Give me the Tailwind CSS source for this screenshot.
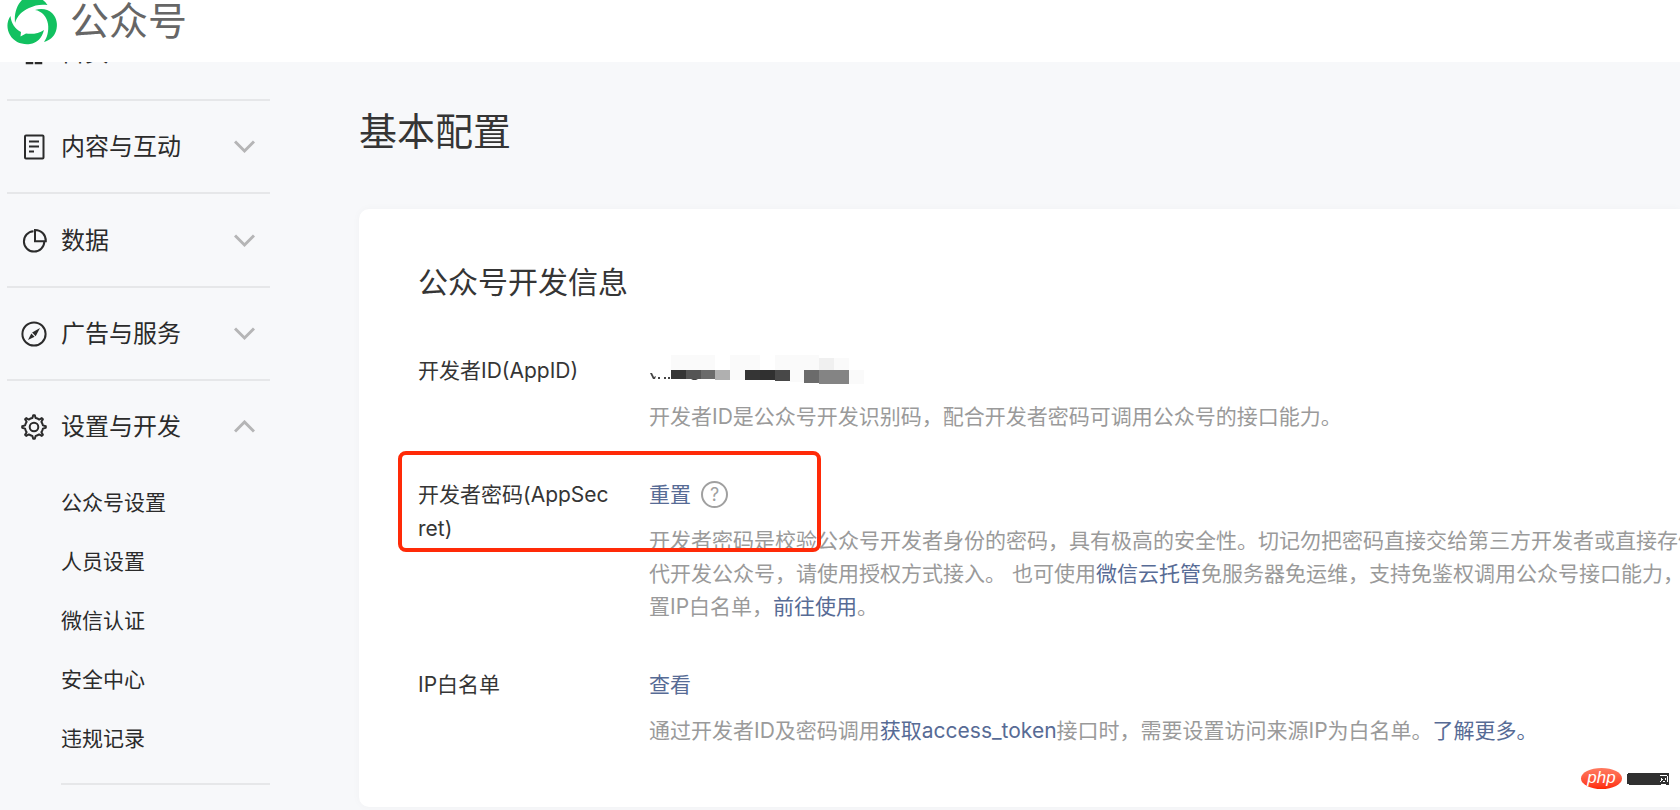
<!DOCTYPE html>
<html lang="zh-CN">
<head>
  <meta charset="UTF-8">
  <meta name="viewport" content="width=device-width, initial-scale=1.0">
  <title>公众号 - 基本配置</title>
  <script src="https://cdn.jsdelivr.net/npm/@tailwindcss/browser@4"></script>
</head>
<body class="relative min-h-screen overflow-x-hidden bg-[#f7f8fa] font-['Inter','Noto_Sans_CJK_SC',sans-serif] text-[#353535]">
  <!-- Header -->
  <header class="relative z-10 flex h-[62px] items-start bg-white pl-[7px]">
    <a href="#" class="flex items-start gap-3">
      <svg class="h-[45px] w-[51px]" viewBox="7 0 51 45" fill="#12c160" aria-hidden="true">
        <path d="M15 23C14 13 17 4 24 -2C33 -7 43 -2 47.500 5C41 4 35 5 29 8C22 11 17 16 15 23Z"/>
        <path d="M35 10C41 8 48 9 52 13C57 18 58 25 56 31C54 37 50 40 44 42C47 38 49 31 48 24C47 17 42 11 35 10Z"/>
        <path d="M10.500 16C6.500 22 6.500 29 10 35C14 42 22 45 30 44C37 43 42 38 44 30C39 33.500 32 34.500 26 33.500L20.500 36.500L21 32C15 29 11 23 10.500 16Z"/>
      </svg>
      <span class="text-[39px] leading-[42px] text-[#666]">公众号</span>
    </a>
  </header>

  <div class="flex">
    <!-- Sidebar -->
    <nav class="-mt-[55px] ml-[7px] w-[263px] shrink-0 text-[24px] text-[#2b2b2b]">
      <a href="#" class="flex h-[92px] items-center pr-4 pl-[14px]">
        <svg class="mr-[14px] size-[26px]" viewBox="0 0 26 26" fill="none" stroke="#2b2b2b" stroke-width="2.500"><path d="M2 12L13 3l11 9M6 10v13h5v-8h4v8h5V10"/></svg>
        首页
      </a>
      <button type="button" aria-expanded="false" class="flex h-[93px] w-full items-center border-t-2 border-[#e6e7e9] pt-px pr-[15px] pl-[14px]">
        <svg class="mr-[14px] size-[26px]" viewBox="0 0 26 26" fill="none" stroke="#2b2b2b" stroke-width="2"><rect x="4" y="1.500" width="18.500" height="23" rx="1"/><path d="M8 7.500h10M8 12.500h10M8 17.500h5"/></svg>
        <span>内容与互动</span>
        <svg class="ml-auto h-[14px] w-[21px]" viewBox="0 0 21 14" fill="none" stroke="#b5b5b6" stroke-width="3"><path d="M1 1.500l9.500 9.500L20 1.500"/></svg>
      </button>
      <button type="button" aria-expanded="false" class="flex h-[94px] w-full items-center border-t-2 border-[#e6e7e9] pt-px pr-[15px] pl-[14px]">
        <svg class="mr-[14px] size-[26px]" viewBox="0 0 26 26" fill="none" stroke="#2b2b2b" stroke-width="2"><path d="M12.500 3.200a10.200 10.200 0 1 0 10.800 10.500"/><path d="M14 2v11.200h10.800C25 7 20.500 2 14 2z"/></svg>
        <span>数据</span>
        <svg class="ml-auto h-[14px] w-[21px]" viewBox="0 0 21 14" fill="none" stroke="#b5b5b6" stroke-width="3"><path d="M1 1.500l9.500 9.500L20 1.500"/></svg>
      </button>
      <button type="button" aria-expanded="false" class="flex h-[93px] w-full items-center border-t-2 border-[#e6e7e9] pt-px pr-[15px] pl-[14px]">
        <svg class="mr-[14px] size-[26px]" viewBox="0 0 26 26" fill="none" stroke="#2b2b2b" stroke-width="2"><circle cx="13" cy="13" r="11.600"/><path d="M19 7l-4.300 8.200-3.600-3.600z" fill="#2b2b2b" stroke="none"/><path d="M7 19l3.300-6.600 3.300 3.300z" fill="#2b2b2b" stroke="none"/></svg>
        <span>广告与服务</span>
        <svg class="ml-auto h-[14px] w-[21px]" viewBox="0 0 21 14" fill="none" stroke="#b5b5b6" stroke-width="3"><path d="M1 1.500l9.500 9.500L20 1.500"/></svg>
      </button>
      <button type="button" aria-expanded="true" class="flex h-[94px] w-full items-center border-t-2 border-[#e6e7e9] pr-[15px] pl-[14px]">
        <svg class="mr-[14px] size-[26px]" viewBox="0 0 26 26" fill="none" stroke="#2b2b2b" stroke-width="2" stroke-linejoin="round"><circle cx="13" cy="13" r="4.300"/><path d="M11.400 4.100L12.200 1.200H13.800L14.600 4.100A9 9 0 0 1 18.200 5.600L20.800 4.100L21.900 5.200L20.400 7.800A9 9 0 0 1 21.900 11.400L24.800 12.200V13.800L21.900 14.600A9 9 0 0 1 20.400 18.200L21.900 20.800L20.800 21.900L18.200 20.400A9 9 0 0 1 14.600 21.900L13.800 24.800H12.200L11.400 21.900A9 9 0 0 1 7.800 20.400L5.200 21.900L4.100 20.800L5.600 18.200A9 9 0 0 1 4.100 14.600L1.200 13.800V12.200L4.100 11.400A9 9 0 0 1 5.600 7.800L4.100 5.200L5.200 4.100L7.800 5.600A9 9 0 0 1 11.400 4.100Z"/></svg>
        <span>设置与开发</span>
        <svg class="ml-auto h-[14px] w-[21px]" viewBox="0 0 21 14" fill="none" stroke="#b5b5b6" stroke-width="3"><path d="M1 11.500l9.500-9.500 9.500 9.500"/></svg>
      </button>
      <ul class="ml-[54px] border-b-2 border-[#e6e7e9] pb-[15px] text-[21px] leading-[59px]">
        <li><a href="#">公众号设置</a></li>
        <li><a href="#">人员设置</a></li>
        <li><a href="#">微信认证</a></li>
        <li><a href="#">安全中心</a></li>
        <li><a href="#">违规记录</a></li>
      </ul>
    </nav>

    <!-- Content -->
    <main class="ml-[89px] min-w-0 flex-1 pb-1">
      <h1 class="pt-[41px] text-[38px] leading-[56px]">基本配置</h1>

      <section class="mt-[50px] overflow-hidden rounded-l-[10px] bg-white pt-[51px] pb-[60px] pl-[59px] text-[21px] leading-[33px] shadow-[0_0_8px_rgba(0,0,0,0.03)]">
        <h2 class="text-[30px] leading-[44px]">公众号开发信息</h2>

        <div class="mt-[50px] flex flex-col gap-[45px]">
          <div class="flex">
            <div class="w-[196px] shrink-0 break-all">开发者ID(AppID)</div>
            <div class="ml-[35px] whitespace-nowrap">
              <!-- masked AppID -->
              <svg class="h-[33px] w-[216px]" viewBox="649 354 216 33" shape-rendering="crispEdges" aria-hidden="true">
                <path fill="#fafafa" d="M671 355h44v15h-44zM730 355h30v15h-30zM775 355h44v15h-44zM834 358h15v12h-15zM730 370h15v10h-15zM790 370h14v12h-14zM849 370h15v14h-15z"/>
                <path fill="#f0f0f0" d="M819 358h15v12h-15z"/>
                <path fill="#353535" d="M671 370h15v9h-15zM745 370h15v10h-15z"/>
                <path fill="#555" d="M686 370h15v9h-15z"/>
                <path fill="#6b6b6b" d="M701 370h14v9h-14zM804 370h15v13h-15z"/>
                <path fill="#b0b0b0" d="M715 370h15v10h-15z"/>
                <path fill="#303030" d="M760 370h15v10h-15z"/>
                <path fill="#484848" d="M775 370h15v11h-15z"/>
                <path fill="#848484" d="M819 370h30v14h-30z"/>
                <path fill="#444" shape-rendering="auto" d="M650 373l3 6h2l1-3-2 1-2-4zM658 377h2v2h-2zM664 377h2v2h-2zM668 377h2v2h-2zM691 379h7l-2 1h-3z"/>
              </svg>
              <p class="mt-[13px] text-[#9a9a9a]">开发者ID是公众号开发识别码，配合开发者密码可调用公众号的接口能力。</p>
            </div>
          </div>

          <div class="relative flex">
            <div class="w-[196px] shrink-0 leading-[34px] break-all">开发者密码(AppSecret)</div>
            <div class="ml-[35px] whitespace-nowrap">
              <div class="flex items-center">
                <a href="#" class="text-[#576b95]">重置</a>
                <button type="button" aria-label="帮助" class="ml-[10px] flex size-[27px] items-center justify-center rounded-full border-2 border-[#a0a0a0] text-[18px] text-[#a0a0a0]">?</button>
              </div>
              <p class="mt-[13px] text-[#9a9a9a]">开发者密码是校验公众号开发者身份的密码，具有极高的安全性。切记勿把密码直接交给第三方开发者或直接存储<br>代开发公众号，请使用授权方式接入。 也可使用<a href="#" class="text-[#576b95]">微信云托管</a>免服务器免运维，支持免鉴权调用公众号接口能力，无<br>置IP白名单，<a href="#" class="text-[#576b95]">前往使用</a>。</p>
            </div>
            <!-- highlight frame -->
            <div class="pointer-events-none absolute -top-[27px] -left-[20px] h-[101px] w-[423px] rounded-lg border-4 border-[#ff2a08]"></div>
          </div>

          <div class="flex">
            <div class="w-[196px] shrink-0 break-all">IP白名单</div>
            <div class="ml-[35px] whitespace-nowrap">
              <a href="#" class="text-[#576b95]">查看</a>
              <p class="mt-[13px] text-[#9a9a9a]">通过开发者ID及密码调用<a href="#" class="text-[#576b95]">获取access_token</a>接口时，需要设置访问来源IP为白名单。<a href="#" class="text-[#576b95]">了解更多。</a></p>
            </div>
          </div>
        </div>
      </section>
    </main>
  </div>

  <!-- Watermark -->
  <div class="absolute right-[11px] bottom-[22px] flex items-center gap-[5px]">
    <span class="flex h-[21px] w-[41px] items-center justify-center rounded-[50%] bg-linear-to-b from-[#ff7a60] to-[#ff2600] pb-[2px] font-['Liberation_Sans',sans-serif] text-[17px] leading-[18px] text-white italic">php</span>
    <svg class="h-[12px] w-[42px]" viewBox="0 0 42 12" shape-rendering="crispEdges" aria-hidden="true">
      <path fill="#303030" d="M0 1h1v-1h41v12h-3v-1h-5v1h-32v-1h-2z"/>
      <path fill="#fff" d="M33 2h7v1h-7zM34 5h1v1h1v1h-1v1h-1zM38 5h1v2h-1zM33 8h1v1h-1zM36 8h2v1h-2zM40 3h1v6h-1z"/>
    </svg>
  </div>
</body>
</html>
